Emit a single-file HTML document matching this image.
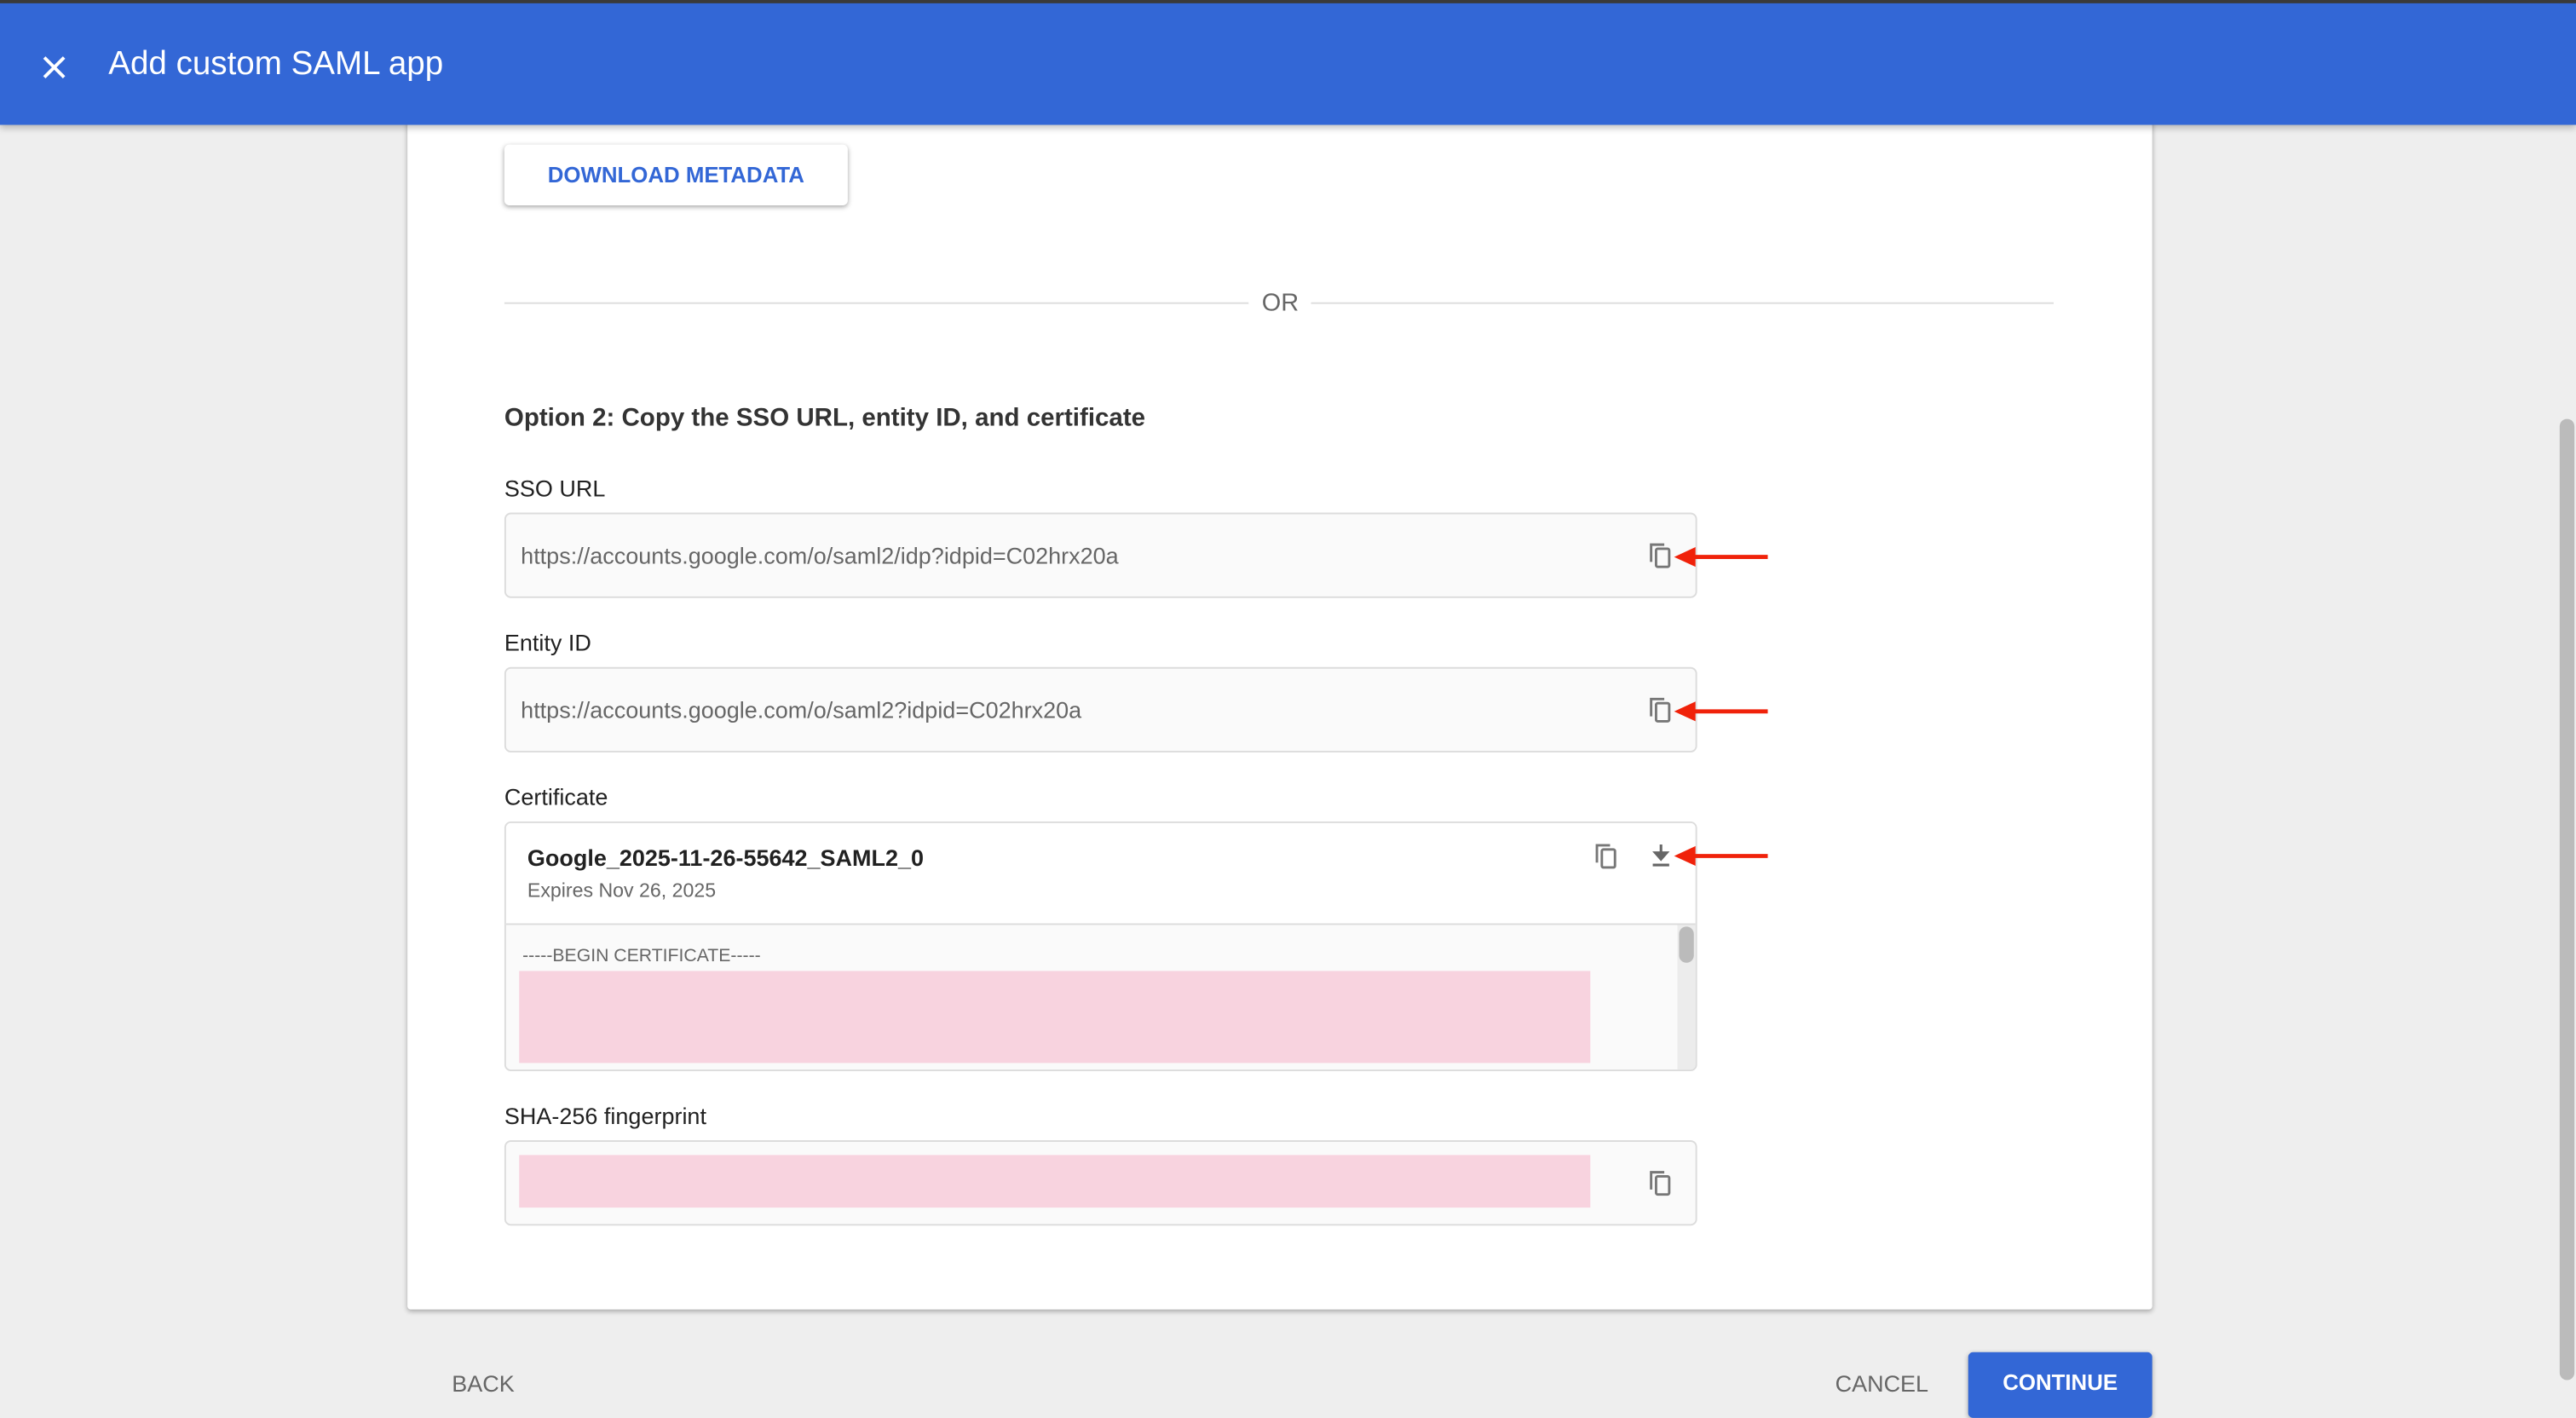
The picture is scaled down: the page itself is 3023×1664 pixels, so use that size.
<!DOCTYPE html>
<html><head><style>
html,body{margin:0;padding:0;}
body{width:3023px;height:1643px;overflow:hidden;background:#eeeeee;font-family:"Liberation Sans",Arial,sans-serif;}
#w{position:absolute;left:0;top:0;width:1568px;height:852px;transform:scale(1.928);transform-origin:0 0;background:#eeeeee;}
.a{position:absolute;}
.top{left:0;top:0;width:1568px;height:76px;background:#3367d6;border-top:2px solid #3a3a3a;box-sizing:border-box;box-shadow:0 2px 4px rgba(0,0,0,.25);z-index:5;}
.card{left:248px;top:60px;width:1062px;height:737px;background:#fff;box-shadow:0 1px 3px rgba(0,0,0,.3);border-radius:2px;}
.lbl{font-size:14px;color:#212121;}
.field{left:307px;width:724px;height:50px;border:1px solid #dcdcdc;border-radius:4px;background:#fafafa;}
.ft{position:absolute;left:9px;top:17px;font-size:14px;color:#666;}
.pink{background:#f8d3df;}
svg{position:absolute;}
</style></head><body><div id="w">
<div class="a card"></div>
<div class="a top">
<svg style="left:25px;top:31px" width="16" height="16" viewBox="0 0 16 16"><path d="M2 2L14 14M14 2L2 14" stroke="#fff" stroke-width="2"/></svg>
<div class="a" style="left:66px;top:26px;font-size:20px;color:#fff;">Add custom SAML app</div>
</div>
<div class="a" style="left:307px;top:88px;width:209px;height:37px;background:#fff;border-radius:3px;box-shadow:0 1px 3px rgba(0,0,0,.35);text-align:center;line-height:37px;color:#3367d6;font-size:13.4px;font-weight:bold;">DOWNLOAD METADATA</div>
<div class="a" style="left:307px;top:184px;width:453px;height:1px;background:#ddd"></div>
<div class="a" style="left:798px;top:184px;width:452px;height:1px;background:#ddd"></div>
<div class="a" style="left:768px;top:176px;font-size:15px;color:#666">OR</div>
<div class="a" style="left:307px;top:246px;font-size:15.3px;font-weight:bold;color:#333">Option 2: Copy the SSO URL, entity ID, and certificate</div>
<div class="a lbl" style="left:307px;top:289px">SSO URL</div>
<div class="a field" style="top:312px"><div class="ft">https://accounts.google.com/o/saml2/idp?idpid=C02hrx20a</div></div>
<div class="a lbl" style="left:307px;top:383px">Entity ID</div>
<div class="a field" style="top:406px"><div class="ft">https://accounts.google.com/o/saml2?idpid=C02hrx20a</div></div>
<div class="a lbl" style="left:307px;top:477px">Certificate</div>
<div class="a" style="left:307px;top:500px;width:724px;height:150px;border:1px solid #dcdcdc;border-radius:4px;background:#fafafa;overflow:hidden">
 <div class="a" style="left:0;top:0;width:724px;height:61px;background:#fff;border-bottom:1px solid #dcdcdc"></div>
 <div class="a" style="left:13px;top:13px;font-size:14px;font-weight:bold;color:#212121">Google_2025-11-26-55642_SAML2_0</div>
 <div class="a" style="left:13px;top:34px;font-size:12px;color:#666">Expires Nov 26, 2025</div>
 <div class="a" style="left:10px;top:75px;font-size:11px;color:#666">-----BEGIN CERTIFICATE-----</div>
 <div class="a pink" style="left:8px;top:90px;width:652px;height:56px"></div>
 <div class="a" style="left:713px;top:62px;width:11px;height:88px;background:#ececec"></div>
 <div class="a" style="left:714px;top:63px;width:9px;height:22px;background:#bbb;border-radius:5px"></div>
</div>
<div class="a lbl" style="left:307px;top:671px">SHA-256 fingerprint</div>
<div class="a field" style="top:694px"><div class="a pink" style="left:8px;top:8px;width:652px;height:32px"></div></div>
<svg style="left:1004px;top:330px" width="14" height="16" viewBox="0 0 14 16"><path d="M1 12V1.5H9" fill="none" stroke="#777" stroke-width="1.5"/><rect x="4" y="4" width="8" height="11" rx="1" fill="none" stroke="#777" stroke-width="1.5"/></svg>
<svg style="left:1004px;top:424px" width="14" height="16" viewBox="0 0 14 16"><path d="M1 12V1.5H9" fill="none" stroke="#777" stroke-width="1.5"/><rect x="4" y="4" width="8" height="11" rx="1" fill="none" stroke="#777" stroke-width="1.5"/></svg>
<svg style="left:971px;top:513px" width="14" height="16" viewBox="0 0 14 16"><path d="M1 12V1.5H9" fill="none" stroke="#777" stroke-width="1.5"/><rect x="4" y="4" width="8" height="11" rx="1" fill="none" stroke="#777" stroke-width="1.5"/></svg>
<svg style="left:1004px;top:712px" width="14" height="16" viewBox="0 0 14 16"><path d="M1 12V1.5H9" fill="none" stroke="#777" stroke-width="1.5"/><rect x="4" y="4" width="8" height="11" rx="1" fill="none" stroke="#777" stroke-width="1.5"/></svg>
<svg style="left:1005px;top:514px" width="12" height="14" viewBox="0 0 12 14"><path d="M6 0V8M2.5 5L6 9L9.5 5Z" stroke="#666" stroke-width="1.6" fill="#666"/><path d="M1 12.5H11" stroke="#666" stroke-width="1.6"/></svg>
<svg style="left:1018px;top:332px" width="60" height="14" viewBox="0 0 60 14"><path d="M12 7H58" stroke="#f0220a" stroke-width="2.5"/><path d="M1 7L14 1V13Z" fill="#f0220a"/></svg>
<svg style="left:1018px;top:426px" width="60" height="14" viewBox="0 0 60 14"><path d="M12 7H58" stroke="#f0220a" stroke-width="2.5"/><path d="M1 7L14 1V13Z" fill="#f0220a"/></svg>
<svg style="left:1018px;top:514px" width="60" height="14" viewBox="0 0 60 14"><path d="M12 7H58" stroke="#f0220a" stroke-width="2.5"/><path d="M1 7L14 1V13Z" fill="#f0220a"/></svg>
<div class="a" style="left:275px;top:834px;font-size:14px;color:#666">BACK</div>
<div class="a" style="left:1117px;top:834px;font-size:14px;color:#666">CANCEL</div>
<div class="a" style="left:1198px;top:823px;width:112px;height:40px;background:#3367d6;border-radius:3px;box-shadow:0 1px 3px rgba(0,0,0,.3)"><div class="a" style="left:21px;top:11px;font-size:13.4px;color:#fff;font-weight:bold">CONTINUE</div></div>
<div class="a" style="left:1558px;top:255px;width:9px;height:585px;background:#bbb;border-radius:5px"></div>
</div></body></html>
